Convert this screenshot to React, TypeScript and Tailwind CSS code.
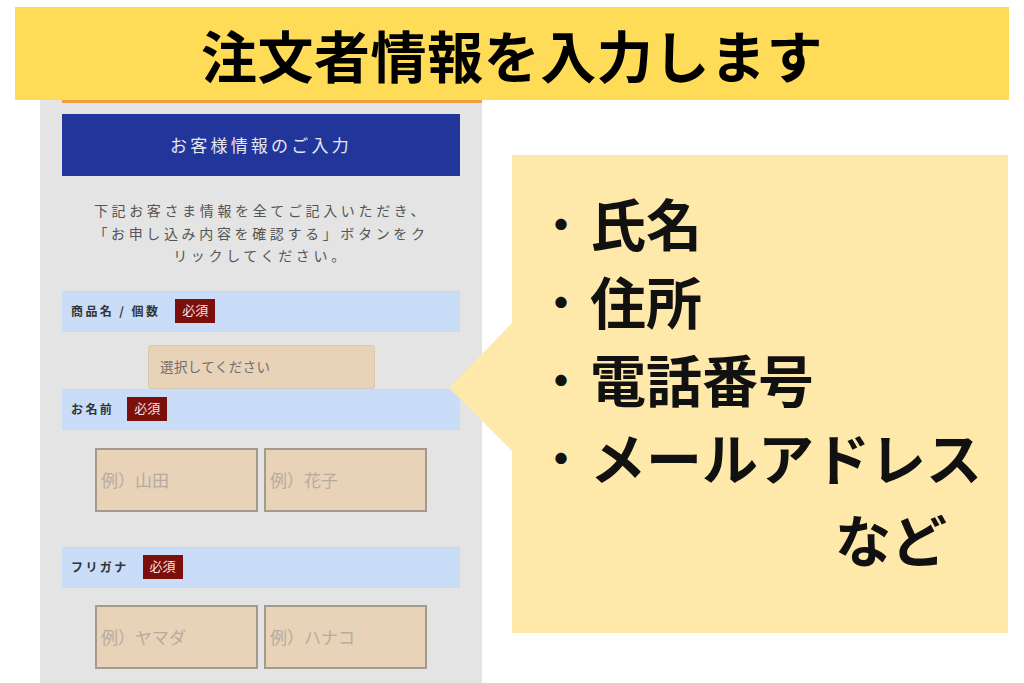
const JP = "font-['Noto_Sans_CJK_JP','Noto_Sans',sans-serif]";

/** Section label row — light blue band with a red 必須 badge. */
function FieldLabel({ label, badgeGap }: { label: string; badgeGap: string }) {
  return (
    <div className="flex h-[41px] items-center border-y border-[#d3d8e0] bg-[#c9dcf8] pl-[9px]">
      <span className="text-[12px] font-bold tracking-[0.2em] text-[#333]">{label}</span>
      <span
        className={`${badgeGap} flex h-[24px] w-[40px] items-center justify-center bg-[#7d0f0a] font-['Liberation_Serif','Noto_Sans_CJK_JP',serif] text-[13px] text-[#f3e6e4]`}
      >
        必須
      </span>
    </div>
  );
}

function TextBox({ placeholder }: { placeholder: string }) {
  return (
    <div className="flex h-[64px] w-[163px] items-center border-2 border-[#a59a8e] bg-[#e8d2b8] pl-[4px] text-[17px] text-[#b7ab9e]">
      {placeholder}
    </div>
  );
}

const POINTS = ['氏名', '住所', '電話番号', 'メールアドレス'];

export default function App() {
  return (
    <div className={`${JP} relative h-[683px] w-[1024px] overflow-hidden bg-white`}>
      {/* title banner */}
      <div className="ml-[15px] mt-[7px] flex h-[93px] w-[994px] items-center justify-center bg-[#fedc57]">
        <h1 className="text-[56px] font-bold leading-none tracking-[0.01em] text-black">
          注文者情報を入力します
        </h1>
      </div>

      <div className="flex items-start">
        {/* phone form screenshot */}
        <div className="ml-[40px] h-[583px] w-[442px] bg-[#e4e4e4] pl-[22px]">
          <div className="h-[3px] bg-[#f0a040]" />
          <div className="mr-[22px]">
            <div className="mt-[11px] flex h-[62px] items-center justify-center bg-[#22359a] text-[17px] tracking-[0.19em] text-[#e6e8f2]">
              お客様情報のご入力
            </div>
            <p className="mt-[23px] text-center text-[14px] leading-[22.5px] tracking-[0.26em] text-[#555]">
              下記お客さま情報を全てご記入いただき、
              <br />
              「お申し込み内容を確認する」ボタンをク
              <br />
              リックしてください。
            </p>

            <div className="mt-[24px]">
              <FieldLabel label="商品名 / 個数" badgeGap="ml-[15px]" />
              <div className="h-[57px] pl-[86px] pt-[13px]">
                <div className="flex h-[44px] w-[227px] items-center rounded-[3px] border border-[#d9c8b4] bg-[#e8d2b8] pl-[11px] text-[13.5px] tracking-[0.03em] text-[#6f6f6f]">
                  選択してください
                </div>
              </div>
              <FieldLabel label="お名前" badgeGap="ml-[13px]" />
              <div className="flex gap-[6px] pl-[33px] pt-[18px]">
                <TextBox placeholder="例）山田" />
                <TextBox placeholder="例）花子" />
              </div>
              <div className="mt-[35px]">
                <FieldLabel label="フリガナ" badgeGap="ml-[14px]" />
              </div>
              <div className="flex gap-[6px] pl-[33px] pt-[17px]">
                <TextBox placeholder="例）ヤマダ" />
                <TextBox placeholder="例）ハナコ" />
              </div>
            </div>
          </div>
        </div>

        {/* callout */}
        <div className="relative ml-[30px] mt-[55px] h-[478px] w-[496px] bg-[#fee8aa] pl-[20px] pt-[28px]">
          <svg
            aria-hidden
            className="absolute left-[-63px] top-[167px]"
            width="64"
            height="130"
            viewBox="0 0 64 130"
          >
            <polygon points="64,0 0,66 64,130" fill="#fee8aa" />
          </svg>
          <ul className="text-[56px] font-bold leading-[78px] text-[#111]">
            {POINTS.map((p) => (
              <li key={p} className="flex items-center">
                <span className="w-[58px] text-center text-[44px]">・</span>
                <span>{p}</span>
              </li>
            ))}
            <li className="pl-[303px] pt-[4px]">など</li>
          </ul>
        </div>
      </div>
    </div>
  );
}
